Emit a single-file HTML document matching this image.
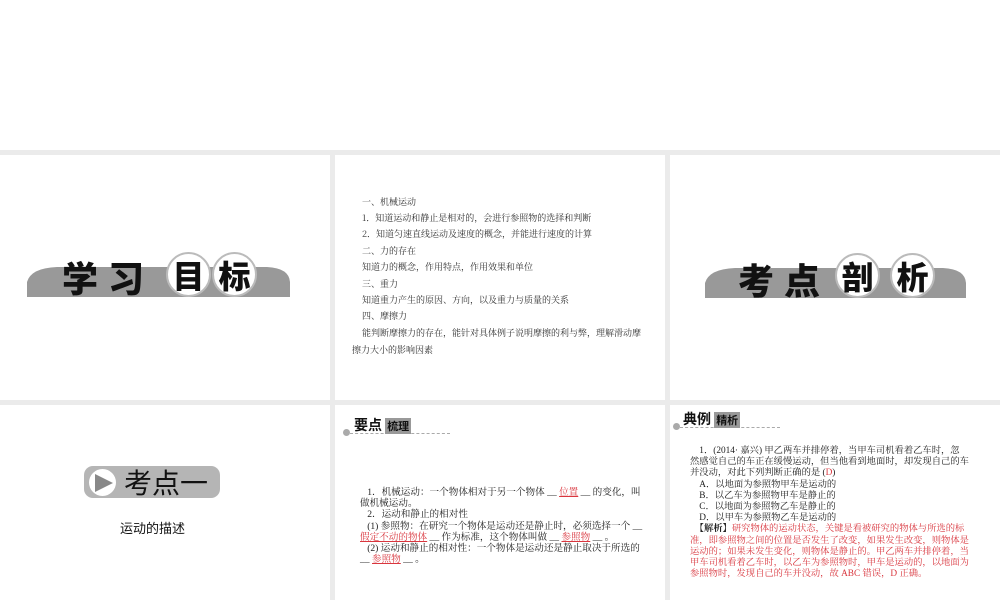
<!DOCTYPE html>
<html><head><meta charset="utf-8"><style>
*{margin:0;padding:0;box-sizing:border-box}
body{width:1000px;height:600px;background:#fff;position:relative;overflow:hidden;font-family:"Liberation Serif","Noto Serif CJK SC",serif;color:#222}
.g{position:absolute;background:#ebebeb}
.a{position:absolute;white-space:nowrap}
.m{font-size:9px;color:#333;font-family:"Noto Serif CJK SC",serif}
.t{font-size:9.6px;line-height:11.2px;color:#222;font-family:"Liberation Serif","Noto Serif CJK SC",serif}
.r{color:#d9363e}
u{color:#d9363e;text-decoration:underline}
.big{font-family:"Noto Sans CJK SC",sans-serif;font-weight:900;font-size:36px;color:#111;line-height:1}
.circ{position:absolute;width:45px;height:45px;border-radius:50%;background:#fff;border:2px solid #bbb;display:flex;align-items:center;justify-content:center}
.circ span{font-size:32px}
.hd{font-family:"Noto Sans CJK SC",sans-serif;font-weight:bold;font-size:14px;color:#111}
.box{display:inline-block;background:#999;color:#111;font-size:11px;padding:0 2px;line-height:16px}
</style></head><body>
<div class="g" style="left:0;top:150px;width:1000px;height:5px"></div>
<div class="g" style="left:330px;top:150px;width:5px;height:450px"></div>
<div class="g" style="left:665px;top:150px;width:5px;height:450px"></div>
<div class="g" style="left:0;top:400px;width:1000px;height:5px"></div>

<svg class="a" style="left:27px;top:262px" width="264" height="36"><path d="M0 35 L0 20 Q4 6 30 5 L240 5 Q262 6 263 20 L263 35 Z" fill="#999"/></svg>
<div class="a big" style="left:62px;top:259px;letter-spacing:10px">学习</div>
<div class="circ" style="left:166px;top:252px"><span class="big">目</span></div>
<div class="circ" style="left:212px;top:252px"><span class="big">标</span></div>

<svg class="a" style="left:705px;top:263px" width="262" height="36"><path d="M0 35 L0 20 Q4 6 30 5 L238 5 Q260 6 261 20 L261 35 Z" fill="#999"/></svg>
<div class="a big" style="left:738px;top:261px;letter-spacing:10px">考点</div>
<div class="circ" style="left:835px;top:253px"><span class="big">剖</span></div>
<div class="circ" style="left:890px;top:253px"><span class="big">析</span></div>

<div class="a m" style="left:362px;top:195px">一、机械运动</div>
<div class="a m" style="left:362px;top:211px">1．知道运动和静止是相对的，会进行参照物的选择和判断</div>
<div class="a m" style="left:362px;top:227px">2．知道匀速直线运动及速度的概念，并能进行速度的计算</div>
<div class="a m" style="left:362px;top:244px">二、力的存在</div>
<div class="a m" style="left:362px;top:260px">知道力的概念，作用特点，作用效果和单位</div>
<div class="a m" style="left:362px;top:277px">三、重力</div>
<div class="a m" style="left:362px;top:293px">知道重力产生的原因、方向，以及重力与质量的关系</div>
<div class="a m" style="left:362px;top:309px">四、摩擦力</div>
<div class="a m" style="left:362px;top:326px">能判断摩擦力的存在，能针对具体例子说明摩擦的利与弊，理解滑动摩</div>
<div class="a m" style="left:352px;top:343px">擦力大小的影响因素</div>

<div class="a" style="left:84px;top:466px;width:136px;height:32px;border-radius:9px;background:#b5b5b5"></div>
<div class="a" style="left:89px;top:469px;width:27px;height:27px;border-radius:50%;background:#fff"></div>
<svg class="a" style="left:93px;top:473px" width="22" height="20"><path d="M2 1 L20 10 L2 19 Z" fill="#888"/></svg>
<div class="a" style="left:124px;top:464px;font-family:'Noto Sans CJK SC',sans-serif;font-size:28px;line-height:36px;color:#111">考点一</div>
<div class="a" style="left:120px;top:518px;font-family:'Noto Sans CJK SC',sans-serif;font-size:13px;color:#111">运动的描述</div>

<div class="a" style="left:343px;top:429px;width:7px;height:7px;border-radius:50%;background:#aaa"></div>
<div class="a" style="left:350px;top:433px;width:100px;border-top:1px dashed #aaa"></div>
<div class="a hd" style="left:354px;top:415px">要点 <span class="box">梳理</span></div>
<div class="a t" style="left:360px;top:487px">&nbsp;&nbsp;&nbsp;1．机械运动：一个物体相对于另一个物体 __ <u>位置</u> __ 的变化，叫<br>做机械运动。<br>&nbsp;&nbsp;&nbsp;2．运动和静止的相对性<br>&nbsp;&nbsp;&nbsp;(1) 参照物：在研究一个物体是运动还是静止时，必须选择一个 __<br><u>假定不动的物体</u> __ 作为标准，这个物体叫做 __ <u>参照物</u> __ 。<br>&nbsp;&nbsp;&nbsp;(2) 运动和静止的相对性：一个物体是运动还是静止取决于所选的<br>__ <u>参照物</u> __ 。</div>

<div class="a" style="left:673px;top:423px;width:7px;height:7px;border-radius:50%;background:#aaa"></div>
<div class="a" style="left:680px;top:427px;width:100px;border-top:1px dashed #aaa"></div>
<div class="a hd" style="left:683px;top:409px">典例 <span class="box">精析</span></div>
<div class="a t" style="left:690px;top:446px;font-size:9.3px">&nbsp;&nbsp;&nbsp;&nbsp;1．(2014· 嘉兴) 甲乙两车并排停着，当甲车司机看着乙车时，忽<br>然感觉自己的车正在缓慢运动，但当他看到地面时，却发现自己的车<br>并没动，对此下列判断正确的是 (<span class="r">D</span>)<br>&nbsp;&nbsp;&nbsp;&nbsp;A．以地面为参照物甲车是运动的<br>&nbsp;&nbsp;&nbsp;&nbsp;B．以乙车为参照物甲车是静止的<br>&nbsp;&nbsp;&nbsp;&nbsp;C．以地面为参照物乙车是静止的<br>&nbsp;&nbsp;&nbsp;&nbsp;D．以甲车为参照物乙车是运动的<br><span class="r">&nbsp;&nbsp;<b style="color:#222">【解析】</b>研究物体的运动状态，关键是看被研究的物体与所选的标<br>准，即参照物之间的位置是否发生了改变，如果发生改变，则物体是<br>运动的；如果未发生变化，则物体是静止的。甲乙两车并排停着，当<br>甲车司机看着乙车时，以乙车为参照物时，甲车是运动的，以地面为<br>参照物时，发现自己的车并没动，故 ABC 错误，D 正确。</span></div>
</body></html>
